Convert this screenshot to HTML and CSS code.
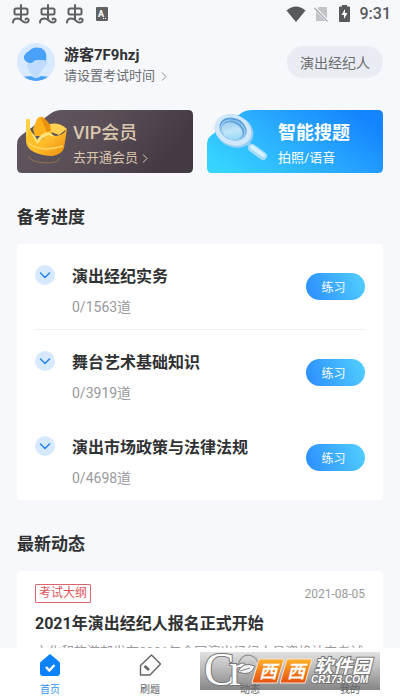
FILE: index.html
```html
<!DOCTYPE html>
<html lang="zh-CN">
<head>
<meta charset="utf-8">
<meta name="viewport" content="width=device-width, initial-scale=1">
<title>演出经纪人</title>
<link rel="stylesheet" href="styles.css">
</head>
<body>
<svg width="0" height="0" class="defs" aria-hidden="true">
  <defs>
    <symbol id="bug" viewBox="0 0 18 20">
      <path d="M9 1V16M4 4.500H14Q15.500 4.500 15.500 6V9Q15.500 10.500 14 10.500H4Q2.500 10.500 2.500 9V6Q2.500 4.500 4 4.500ZM1 18.500C1 15.500 3 14.500 5.500 14.500C10 14.500 10 18.500 13.500 18.500C16 18.500 17 17 16.500 15.500C16 14 13.500 14 13.500 15.500" fill="none" stroke="#606163" stroke-width="2" stroke-linecap="round"/>
    </symbol>
    <symbol id="chevron" viewBox="0 0 20 20">
      <path d="M5.500 8 10 12.500 14.500 8" fill="none" stroke="#2385e8" stroke-width="1.500" stroke-linecap="round" stroke-linejoin="round"/>
    </symbol>
  </defs>
</svg>
<div class="app">
  <header class="status">
    <div class="status-group notices">
      <svg width="18" height="20"><use href="#bug"/></svg>
      <svg width="18" height="20"><use href="#bug"/></svg>
      <svg width="18" height="20"><use href="#bug"/></svg>
      <svg class="input-icon" width="12" height="14" viewBox="0 0 12 14"><rect width="12" height="14" rx="1" fill="#606163"/><text x="2" y="10" class="input-letter">A</text><path d="M7 11.500h1M9 11.500h1" stroke="#fff"/></svg>
    </div>
    <div class="status-group system">
      <svg width="20" height="16" viewBox="0 0 20 16"><path d="M0.500 4.500Q10-3.500 19.500 4.500L10 16Z" fill="#58595b"/></svg>
      <svg width="15" height="16" viewBox="0 0 15 16"><path d="M5 1h7q1 0 1 1v13H2V4Z" fill="#c3c4c8"/><path d="M0 1 14 15.500" stroke="#f6f8fc" stroke-width="3"/><path d="M0.500 2 13.500 15.500" stroke="#a9aaad" stroke-width="1.200"/></svg>
      <svg width="11" height="17" viewBox="0 0 11 17"><path d="M3 0h5v1.500h2q1 0 1 1V16q0 1-1 1H1q-1 0-1-1V2.500q0-1 1-1h2Z" fill="#58595b"/><path d="M6 4 2.500 10H5v4l3.500-6H6Z" fill="#fff"/></svg>
      <time class="clock">9:31</time>
    </div>
  </header>

  <main class="content">
    <section class="profile">
      <svg class="avatar" width="38" height="38" viewBox="0 0 38 38">
        <clipPath id="face"><circle cx="19" cy="19" r="19"/></clipPath>
        <g clip-path="url(#face)">
          <rect width="38" height="38" fill="#d8eaff"/>
          <path d="M12 16H28V17Q32 17 30 21 28 24 26 25 24 30 22 31V34H15V31Q12 29 10 23Z" fill="#bfdcff"/>
          <path d="M5 34 14 33Q19 37 24 33L33 34V38H5Z" fill="#49a1fa"/>
          <path d="M12 20Q6 18 7 13 9 9 12 8 16 3 24 5 31 8 29 18L27 17H20Q17 17 15 20Z" fill="#49a1fa"/>
        </g>
      </svg>
      <div class="who">
        <h1 class="name">游客7F9hzj</h1>
        <a class="exam-time" href="#time">请设置考试时间
          <svg width="6" height="9" viewBox="0 0 6 9"><path d="M1 0.500 5 4.500 1 8.500" fill="none" stroke="#8b8d91"/></svg>
        </a>
      </div>
      <button class="subject" type="button">演出经纪人</button>
    </section>

    <section class="promos">
      <a class="promo" href="#vip">
        <svg class="promo-bg" viewBox="0 0 176 63" preserveAspectRatio="none" aria-hidden="true">
          <defs><linearGradient id="dark" x1="0" y1="0" x2="1" y2="0.300"><stop offset="0" stop-color="#625861"/><stop offset="0.500" stop-color="#5a4f57"/><stop offset="1" stop-color="#443a43"/></linearGradient></defs>
          <path d="M45 0H171Q176 0 176 5V58Q176 63 171 63H5Q0 63 0 58V34Q0 28 6 24L33 4Q38 0 45 0Z" fill="url(#dark)"/>
        </svg>
        <svg class="promo-art" width="58" height="63" viewBox="0 0 58 63" aria-hidden="true">
          <defs><linearGradient id="gold" x1="0" y1="0" x2="1" y2="1"><stop offset="0" stop-color="#ffc526"/><stop offset="0.550" stop-color="#ffbd2b"/><stop offset="1" stop-color="#ed8b0c"/></linearGradient></defs>
          <path d="M11 46Q14 53 32 53 43 52 42 48" fill="none" stroke="#94734b"/>
          <path d="M16 19 20 9Q23 5 27 8L36 18 34 26H18Z" fill="#ffb11c"/>
          <path d="M27 8 36 18 30 23Q27 15 24 7Z" fill="#e9920f"/>
          <path d="M33 14Q42 12 50 19L42 25 34 22Z" fill="#ffd052"/>
          <path d="M9 10Q10 8 13 10L13 19Q17 26 21 31 27 30 31 22L38 26Q46 26 50 19L47 38Q45 44 36 46 25 46 17 42 9 38 9 31Z" fill="url(#gold)"/>
          <path d="M9 10Q10 8 13 10L13 20 9 28Z" fill="#ffd047"/>
          <path d="M14 23Q18 24 20 30 25 22 32 22L38 27 31 25Q25 28 20 34Z" fill="#ffe579"/>
          <path d="M11 33Q24 43 46 36" fill="none" stroke="#ffd563" stroke-width="1.500"/>
        </svg>
        <span class="promo-text gold">
          <strong class="promo-title vip">VIP会员</strong>
          <span class="promo-sub">去开通会员
            <svg width="6" height="9" viewBox="0 0 6 9"><path d="M1 0.500 5 4.500 1 8.500" fill="none" stroke="#dac7ae"/></svg>
          </span>
        </span>
      </a>
      <a class="promo" href="#search">
        <svg class="promo-bg" viewBox="0 0 176 63" preserveAspectRatio="none" aria-hidden="true">
          <defs><linearGradient id="sky" x1="0" y1="0.800" x2="1" y2="0.300"><stop offset="0" stop-color="#36d5ff"/><stop offset="0.500" stop-color="#2aacff"/><stop offset="1" stop-color="#1484ff"/></linearGradient></defs>
          <path d="M45 0H171Q176 0 176 5V58Q176 63 171 63H5Q0 63 0 58V34Q0 28 6 24L33 4Q38 0 45 0Z" fill="url(#sky)"/>
        </svg>
        <svg class="promo-art" width="64" height="63" viewBox="0 0 64 63" aria-hidden="true">
          <defs><linearGradient id="glass" x1="0" y1="0" x2="1" y2="1"><stop offset="0" stop-color="#8fc4ea"/><stop offset="0.500" stop-color="#c2e6f8"/><stop offset="1" stop-color="#8bd2f7"/></linearGradient></defs>
          <path d="M39 32 46 38" stroke="#87cef6" stroke-width="4"/>
          <path d="M45 38 56 46" stroke="#a6dcfb" stroke-width="8" stroke-linecap="round"/>
          <path d="M45 37 56 45" stroke="#d8f1ff" stroke-width="4" stroke-linecap="round"/>
          <ellipse cx="27" cy="21" rx="20" ry="16" transform="rotate(25 27 21)" fill="#9acff3"/>
          <ellipse cx="26" cy="20" rx="19" ry="15" transform="rotate(25 26 20)" fill="#cfe9fb"/>
          <ellipse cx="26" cy="19" rx="14" ry="11" transform="rotate(25 26 19)" fill="#5b9fd8"/>
          <ellipse cx="26" cy="20" rx="13" ry="10" transform="rotate(25 26 20)" fill="#a9d7f3"/>
          <ellipse cx="26" cy="20" rx="12" ry="9" transform="rotate(25 26 20)" fill="#62a7de"/>
          <ellipse cx="25" cy="21" rx="11" ry="8" transform="rotate(25 25 21)" fill="url(#glass)"/>
        </svg>
        <span class="promo-text white">
          <strong class="promo-title">智能搜题</strong>
          <span class="promo-sub">拍照/语音</span>
        </span>
      </a>
    </section>

    <section>
      <h2 class="heading">备考进度</h2>
      <ul class="card courses">
        <li class="course">
          <svg class="toggle" width="20" height="20"><use href="#chevron"/></svg>
          <div class="course-info"><h3 class="title">演出经纪实务</h3><p class="count">0/1563道</p></div>
          <button class="practice" type="button">练习</button>
        </li>
        <li class="course">
          <svg class="toggle" width="20" height="20"><use href="#chevron"/></svg>
          <div class="course-info"><h3 class="title">舞台艺术基础知识</h3><p class="count">0/3919道</p></div>
          <button class="practice" type="button">练习</button>
        </li>
        <li class="course">
          <svg class="toggle" width="20" height="20"><use href="#chevron"/></svg>
          <div class="course-info"><h3 class="title">演出市场政策与法律法规</h3><p class="count">0/4698道</p></div>
          <button class="practice" type="button">练习</button>
        </li>
      </ul>
    </section>

    <section>
      <h2 class="heading">最新动态</h2>
      <article class="card news">
        <div class="news-meta"><span class="tag">考试大纲</span><time class="date">2021-08-05</time></div>
        <h3 class="title">2021年演出经纪人报名正式开始</h3>
        <p class="excerpt">文化和旅游部发布2021年全国演出经纪人员资格认定考试</p>
      </article>
    </section>
  </main>

  <nav class="tabs">
    <a class="tab active" href="#home">
      <svg width="22" height="24" viewBox="0 0 22 24"><path d="M11 1 20 8.500Q21 9.300 21 10.500V20q0 3-3 3H4q-3 0-3-3V10.500Q1 9.300 2 8.500Z" fill="#0d82fa"/><path d="M7 14 10.300 17.500 15.500 12" fill="none" stroke="#fff" stroke-width="2.300"/></svg>
      <span class="tab-label">首页</span>
    </a>
    <a class="tab" href="#practice">
      <svg width="22" height="24" viewBox="0 0 22 24"><path d="M12.500 2 21.500 11 11 22H1.500V12.500Z" fill="none" stroke="#626367" stroke-width="1.400" stroke-linejoin="round"/><path d="M5.500 13 10 17" stroke="#626367" stroke-width="2.600"/></svg>
      <span class="tab-label">刷题</span>
    </a>
    <a class="tab" href="#news">
      <svg width="22" height="24" viewBox="0 0 22 24"><circle cx="11" cy="12" r="10" fill="none" stroke="#626367" stroke-width="1.400"/><path d="M14 8 12.500 13.500 7 16 9 10Z" fill="none" stroke="#626367"/></svg>
      <span class="tab-label">动态</span>
    </a>
    <a class="tab" href="#me">
      <svg width="22" height="24" viewBox="0 0 22 24"><circle cx="11" cy="7" r="5" fill="none" stroke="#626367" stroke-width="1.400"/><path d="M2 22q0-8 9-8t9 8Z" fill="none" stroke="#626367" stroke-width="1.400"/></svg>
      <span class="tab-label">我的</span>
    </a>
    <svg class="brand" width="180" height="38" viewBox="0 0 180 38">
      <defs>
        <linearGradient id="grey" x1="0" y1="0" x2="0" y2="1"><stop offset="0" stop-color="#dedede" stop-opacity="0.900"/><stop offset="1" stop-color="#858585"/></linearGradient>
        <linearGradient id="orange" x1="0" y1="0" x2="0" y2="1"><stop offset="0" stop-color="#ffb12a"/><stop offset="1" stop-color="#e8500e"/></linearGradient>
      </defs>
      <rect width="180" height="38" fill="url(#grey)"/>
      <path d="M38 14Q40 3 48 3 56 4 58 11" fill="none" stroke="#858585"/>
      <text x="4" y="33" class="brand-c">C</text>
      <text x="29" y="33" class="brand-r">r</text>
      <path d="M38 20Q42 9 55 14 51 25 38 20Z" fill="#f4f4f4" stroke="#777"/>
      <path d="M40 19 50 16" stroke="#888"/>
      <path d="M59 7H84L77 31H52Z" fill="url(#orange)" stroke="#f8e4d4"/>
      <path d="M87 7H112L105 31H80Z" fill="url(#orange)" stroke="#f8e4d4"/>
      <text x="59" y="26" class="brand-xi">西</text>
      <text x="87" y="26" class="brand-xi">西</text>
      <text x="114" y="21" class="brand-soft">软件园</text>
      <text x="111" y="31" class="brand-url">CR173.COM</text>
    </svg>
  </nav>
</div>
</body>
</html>
```
FILE: styles.css
```css
* { box-sizing: border-box; }

body,
h1, h2, h3, p, ul {
  margin: 0;
  padding: 0;
}

body {
  font-family: Roboto, "Noto Sans CJK SC", sans-serif;
  background: #f6f8fc;
  color: #303133;
}

a { color: inherit; text-decoration: none; }
button { border: 0; padding: 0; font-family: inherit; }
svg { display: block; flex: none; }
.defs { position: absolute; }

.app {
  display: flex;
  flex-direction: column;
  height: 100vh;
  overflow: hidden;
}

/* Status bar */
.status {
  display: flex;
  justify-content: space-between;
  flex: none;
  height: 27px;
  padding: 0 9px 0 12px;
}
.status-group { display: flex; align-items: center; }
.notices { gap: 9px; }
.input-icon { margin-left: 3px; }
.input-letter { font: 700 9px Roboto, sans-serif; fill: #fff; }
.system { gap: 8px; }
.system svg + svg + svg { margin: 0 2px; }
.clock { font-size: 16px; font-weight: 500; color: #58595b; }

.content {
  flex: 1;
  min-height: 0;
  overflow: hidden;
  padding: 16px 17px 0;
}

/* Profile */
.profile { display: flex; align-items: center; height: 38px; }
.who { flex: 1; margin-left: 9px; padding-top: 6px; }
.name { font-size: 15px; line-height: 22px; font-weight: 700; }
.exam-time {
  display: flex;
  align-items: center;
  gap: 6px;
  font-size: 13px;
  line-height: 20px;
  color: #6b6c70;
}
.subject {
  height: 32px;
  padding: 0 13px;
  border-radius: 16px;
  background: #e9edf3;
  color: #6b6c70;
  font-size: 14px;
}

/* Promo cards */
.promos {
  display: grid;
  grid-template-columns: 1fr 1fr;
  gap: 14px;
  margin-top: 29px;
}
.promo { position: relative; display: block; height: 63px; }
.promo-bg { position: absolute; inset: 0; width: 100%; height: 100%; }
.promo-art { position: absolute; left: 0; top: 0; }
.promo-text {
  position: relative;
  display: flex;
  flex-direction: column;
  padding: 10px 0 0 56px;
}
.white { padding-left: 71px; color: #fff; }
.gold { color: #dac7ae; }
.promo-title { font-size: 18px; line-height: 26px; font-weight: 700; }
.vip { font-weight: 500; }
.promo-sub {
  display: flex;
  align-items: center;
  gap: 4px;
  font-size: 13px;
  line-height: 24px;
}

/* Sections */
.heading {
  margin: 31px 0 14px;
  font-size: 17px;
  line-height: 26px;
  font-weight: 700;
}
.card { background: #fff; border-radius: 4px; }
.title { font-size: 16px; line-height: 24px; font-weight: 700; }

.courses { list-style: none; padding: 0 18px; }
.course {
  display: flex;
  align-items: flex-start;
  height: 85px;
  padding-top: 21px;
}
.course:first-child { height: 86px; border-bottom: 1px solid #edeff2; }
.toggle { border-radius: 10px; background: #d7e9ff; }
.course-info { flex: 1; margin-left: 17px; }
.count { margin-top: 7px; font-size: 14px; line-height: 22px; color: #999a9d; }
.practice {
  width: 59px;
  height: 27px;
  margin-top: 8px;
  padding-right: 4px;
  border-radius: 14px;
  background: linear-gradient(70deg, #2b8dff, #52d0ff);
  color: #fff;
  font-size: 12px;
}

.news { padding: 13px 18px 0; }
.news-meta {
  display: flex;
  justify-content: space-between;
  align-items: center;
}
.tag {
  padding: 0 3px;
  border: 1px solid #e0646e;
  border-radius: 1px;
  color: #dc5560;
  font-size: 12px;
  line-height: 17px;
}
.date { font-size: 12px; color: #999a9d; }
.news .title { margin-top: 9px; }
.excerpt {
  margin-top: 6px;
  font-size: 13px;
  line-height: 20px;
  color: #999a9d;
  white-space: nowrap;
}

/* Bottom tabs */
.tabs {
  position: relative;
  display: grid;
  grid-template-columns: repeat(4, 1fr);
  flex: none;
  height: 52px;
  background: #fff;
}
.tab {
  display: flex;
  flex-direction: column;
  align-items: center;
  padding-top: 5px;
  color: #626367;
}
.tab-label { position: relative; z-index: 1; margin-top: 5px; font-size: 10px; line-height: 16px; }
.active { color: #3592ea; }

.brand { position: absolute; right: 20px; top: 4px; }
.brand text { fill: #fff; stroke: #777; stroke-width: 2px; paint-order: stroke; }
.brand .brand-c { font: 46px "Liberation Serif", serif; }
.brand .brand-r { font: 46px "Liberation Serif", serif; }
.brand .brand-xi { font: italic 700 18px "Noto Sans CJK SC", sans-serif; stroke: none; }
.brand .brand-soft { font: italic 700 19px "Noto Sans CJK SC", sans-serif; }
.brand .brand-url { font: italic 700 10px "Liberation Sans", sans-serif; }
```
